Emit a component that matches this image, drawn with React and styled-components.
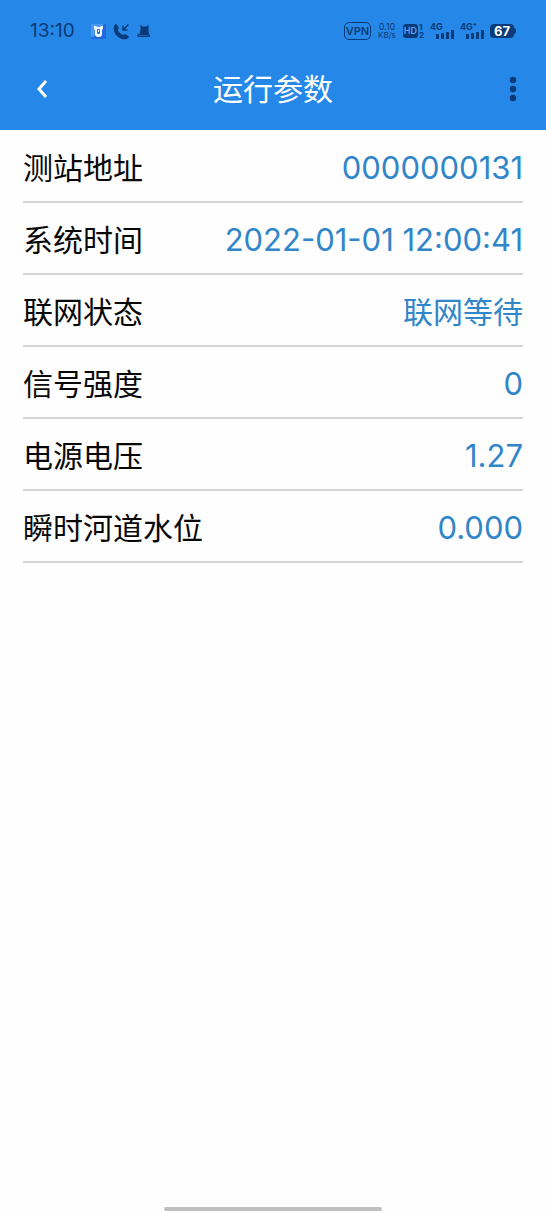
import React from "react";
import styled, { createGlobalStyle } from "styled-components";

const INK = "#0b3a78";

const params = [
  { label: "测站地址", value: "0000000131" },
  { label: "系统时间", value: "2022-01-01 12:00:41" },
  { label: "联网状态", value: "联网等待", isText: true },
  { label: "信号强度", value: "0" },
  { label: "电源电压", value: "1.27" },
  { label: "瞬时河道水位", value: "0.000" }
];

function Signal({ label }) {
  return (
    <SignalBox>
      <SignalLabel>{label}</SignalLabel>
      <svg width="18" height="9" viewBox="0 0 18 9" fill={INK}>
        <rect x="0" y="4" width="3" height="5" rx="0.5" />
        <rect x="5" y="3" width="3" height="6" rx="0.5" />
        <rect x="10" y="2" width="3" height="7" rx="0.5" />
        <rect x="15" y="0" width="3" height="9" rx="0.5" />
      </svg>
    </SignalBox>
  );
}

function StatusBar() {
  return (
    <Status>
      <Clock>13:10</Clock>
      <Notices>
        <svg width="15" height="15" viewBox="0 0 15 15">
          <rect width="15" height="15" rx="1" fill="#2268de" />
          <path d="M0 0h13L2 13H0z" fill="#4b9af2" />
          <path
            d="M3 2h2l1 1h3l1-1h2v3l-1 1v4c0 2-1 3-3.5 3S4 12 4 10V6L3 5z"
            fill="#f3fbff"
          />
          <rect x="6" y="5" width="3" height="5" rx="1" fill="#2268de" />
          <rect x="7" y="6" width="1" height="2" fill="#f3fbff" />
        </svg>
        <svg width="17" height="17" viewBox="0 0 16 16" fill={INK}>
          <path d="M.8 3.5C1.2 2 2 1.200 3.200 1L5.500 4.500 4.500 6.600C5.200 8.500 7 10.300 9.300 11.200l2.200-.8 3.500 2.400c-.4 1.400-1.200 2-2.400 2.400C6.500 16.500-.5 10 .8 3.500z" />
          <path
            d="M14.5 1.5 9.7 6.3M9.5 2.5v4h4"
            fill="none"
            stroke={INK}
            strokeWidth="1.4"
          />
        </svg>
        <svg width="13" height="14" viewBox="0 0 13 14" fill={INK}>
          <path d="M3.500 .5l2 2h4l2-2v6l.5 4h1V13H1.500C-.3 13-.3 10 1.500 10H2.500l1-4z" />
          <path d="M1 11.5h11" stroke="#2588e8" strokeWidth="0.5" />
        </svg>
      </Notices>
      <Indicators>
        <Vpn>VPN</Vpn>
        <Speed>
          <span>0.10</span>
          <span>KB/s</span>
        </Speed>
        <Hd>
          <HdTag>HD</HdTag>
          <HdSims>
            <span>1</span>
            <span>2</span>
          </HdSims>
        </Hd>
        <Signal label="4G" />
        <Signal label="4G⁺" />
        <Battery>
          <BatteryBody>67</BatteryBody>
          <BatteryTip />
        </Battery>
      </Indicators>
    </Status>
  );
}

function App() {
  return (
    <Page>
      <GlobalStyle />
      <Header>
        <StatusBar />
        <TitleBar>
          <IconButton aria-label="返回">
            <svg width="12" height="20" viewBox="0 0 12 20">
              <path
                d="M10 2 3 10l7 8"
                fill="none"
                stroke="white"
                strokeWidth="3"
              />
            </svg>
          </IconButton>
          <Title>运行参数</Title>
          <IconButton aria-label="更多">
            <svg width="8" height="26" viewBox="0 0 8 26" fill={INK}>
              <circle cx="4" cy="4" r="3.2" />
              <circle cx="4" cy="13" r="3.2" />
              <circle cx="4" cy="22" r="3.2" />
            </svg>
          </IconButton>
        </TitleBar>
      </Header>
      <List>
        {params.map(({ label, value, isText }) => (
          <Row key={label}>
            <Label>{label}</Label>
            <Value $isText={isText}>{value}</Value>
          </Row>
        ))}
      </List>
      <HomeBar />
    </Page>
  );
}

export default App;

const GlobalStyle = createGlobalStyle`
  * {
    box-sizing: border-box;
  }

  body {
    margin: 0;
    background: #fefefe;
    font-family: Inter, "Noto Sans CJK SC", sans-serif;
  }
`;

const Page = styled.div`
  display: flex;
  flex-direction: column;
  min-height: 100vh;
`;

const Header = styled.header`
  background: #2588e8;
  padding-bottom: 12px;
`;

const Status = styled.div`
  display: flex;
  align-items: center;
  height: 60px;
  padding: 2px 30px 0;
  color: ${INK};
`;

const Clock = styled.time`
  font-size: 19px;
  line-height: 24px;
`;

const Notices = styled.div`
  display: flex;
  align-items: center;
  gap: 7px;
  margin-left: 16px;
`;

const Indicators = styled.div`
  display: flex;
  align-items: center;
  gap: 6px;
  margin-left: auto;
`;

const Vpn = styled.span`
  width: 27px;
  border: 1px solid ${INK};
  border-radius: 5px;
  font-size: 11px;
  font-weight: 600;
  line-height: 16px;
  text-align: center;
`;

const Speed = styled.span`
  display: flex;
  flex-direction: column;
  align-items: center;
  width: 20px;
  font-size: 8px;
  line-height: 8px;

  span:first-child {
    font-size: 9px;
  }
`;

const Hd = styled.span`
  display: flex;
  align-items: center;
  gap: 1px;
`;

const HdTag = styled.span`
  width: 15px;
  border-radius: 3px;
  background: ${INK};
  color: #5aa5ee;
  font-size: 9px;
  font-weight: 600;
  line-height: 14px;
  text-align: center;
`;

const HdSims = styled.span`
  display: flex;
  flex-direction: column;
  font-size: 8px;
  font-weight: 700;
  line-height: 8px;
`;

const SignalBox = styled.span`
  display: flex;
  flex-direction: column;
  width: 24px;

  svg {
    align-self: flex-end;
  }
`;

const SignalLabel = styled.span`
  font-size: 9px;
  font-weight: 700;
  line-height: 6px;
`;

const Battery = styled.span`
  display: flex;
  align-items: center;
`;

const BatteryBody = styled.span`
  width: 24px;
  border-radius: 4px;
  background: ${INK};
  color: white;
  font-size: 13px;
  font-weight: 700;
  line-height: 14px;
  text-align: center;
`;

const BatteryTip = styled.span`
  width: 2px;
  height: 6px;
  border-radius: 0 2px 2px 0;
  background: ${INK};
`;

const TitleBar = styled.div`
  display: flex;
  align-items: center;
  justify-content: space-between;
  height: 58px;
  padding: 0 12px;
`;

const Title = styled.h1`
  margin: 0;
  color: white;
  font-size: 30px;
  font-weight: 400;
  line-height: 44px;
`;

const IconButton = styled.button`
  display: flex;
  align-items: center;
  justify-content: flex-end;
  width: 44px;
  height: 44px;
  border: none;
  padding: 0 8px;
  background: transparent;

  &:last-child {
    padding-right: 17px;
  }
`;

const List = styled.dl`
  margin: 0;
  padding: 1px 23px 0;
`;

const Row = styled.div`
  display: flex;
  align-items: center;
  justify-content: space-between;
  height: 72px;
  padding-top: 4px;
  border-bottom: 2px solid #d5d5d5;
`;

const Label = styled.dt`
  color: #080808;
  font-size: 30px;
  line-height: 44px;
`;

const Value = styled.dd`
  margin: 0;
  color: #3185c9;
  font-size: ${({ $isText }) => ($isText ? "30px" : "31px")};
  line-height: 44px;
`;

const HomeBar = styled.div`
  width: 40%;
  height: 4px;
  margin: auto auto 2px;
  border-radius: 2px;
  background: #c0c0c0;
`;
